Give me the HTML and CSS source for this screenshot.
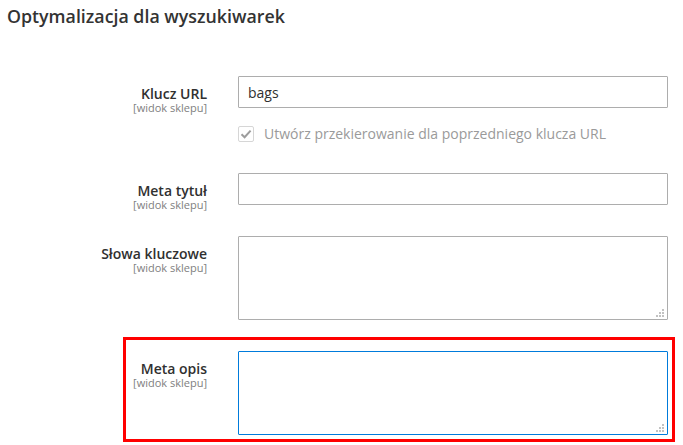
FILE: index.html
```html
<!DOCTYPE html>
<html lang="pl">
<head>
<meta charset="utf-8">
<title>Optymalizacja dla wyszukiwarek</title>
<link rel="stylesheet" href="styles.css">
</head>
<body>
<div class="page">
  <h2 class="section-title">Optymalizacja dla wyszukiwarek</h2>
  <div class="fields">
    <div class="field">
      <div class="label">
        <span class="label-text">Klucz URL</span>
        <span class="scope">[widok sklepu]</span>
      </div>
      <div class="control">
        <input class="input" type="text" value="bags">
        <label class="check-row">
          <span class="checkbox">
            <svg width="12" height="10" viewBox="0 0 12 10"><path d="M1.5 5.2 L4.6 8.2 L10.6 1.6" fill="none" stroke="#9d9d9d" stroke-width="2"/></svg>
          </span>
          <span class="check-text">Utwórz przekierowanie dla poprzedniego klucza URL</span>
        </label>
      </div>
    </div>
    <div class="field">
      <div class="label">
        <span class="label-text">Meta tytuł</span>
        <span class="scope">[widok sklepu]</span>
      </div>
      <div class="control">
        <input class="input" type="text" value="">
      </div>
    </div>
    <div class="field">
      <div class="label">
        <span class="label-text">Słowa kluczowe</span>
        <span class="scope">[widok sklepu]</span>
      </div>
      <div class="control textarea-wrap">
        <textarea class="textarea"></textarea>
        <svg class="grip" width="8" height="8" viewBox="0 0 8 8"><g fill="#c2c2c2"><rect x="6" y="0" width="2" height="2"/><rect x="3" y="3" width="2" height="2"/><rect x="6" y="3" width="2" height="2"/><rect x="0" y="6" width="2" height="2"/><rect x="3" y="6" width="2" height="2"/><rect x="6" y="6" width="2" height="2"/></g></svg>
      </div>
    </div>
    <div class="field highlighted">
      <div class="label">
        <span class="label-text">Meta opis</span>
        <span class="scope">[widok sklepu]</span>
      </div>
      <div class="control textarea-wrap">
        <textarea class="textarea focused"></textarea>
        <svg class="grip" width="8" height="8" viewBox="0 0 8 8"><g fill="#c2c2c2"><rect x="6" y="0" width="2" height="2"/><rect x="3" y="3" width="2" height="2"/><rect x="6" y="3" width="2" height="2"/><rect x="0" y="6" width="2" height="2"/><rect x="3" y="6" width="2" height="2"/><rect x="6" y="6" width="2" height="2"/></g></svg>
      </div>
    </div>
  </div>
</div>
</body>
</html>
```

FILE: styles.css
```css
* { box-sizing: border-box; }
html, body {
  margin: 0;
  padding: 0;
  background: #ffffff;
}
body {
  font-family: "Open Sans", "Liberation Sans", sans-serif;
  color: #303030;
  width: 683px;
  height: 445px;
  overflow: hidden;
}
.page {
  padding-top: 5px;
}
.section-title {
  margin: 0 0 48px 7px;
  font-size: 17.8px;
  line-height: 23px;
  font-weight: 600;
  color: #333333;
}
.fields {
  display: flex;
  flex-direction: column;
  gap: 31px;
}
.field {
  display: grid;
  grid-template-columns: 207px 430px;
  column-gap: 31px;
  align-items: start;
  position: relative;
}
.label {
  display: flex;
  flex-direction: column;
  align-items: flex-end;
  text-align: right;
  padding-top: 9.5px;
  margin-bottom: -10px;
}
.label-text {
  font-size: 14px;
  line-height: 16px;
  font-weight: 600;
  color: #303030;
}
.scope {
  font-size: 11px;
  line-height: 12px;
  color: #808080;
}
.control {
  display: flex;
  flex-direction: column;
}
.input {
  width: 430px;
  height: 32px;
  border: 1px solid #adadad;
  border-radius: 1px;
  padding: 0 9px;
  font-family: "Open Sans", "Liberation Sans", sans-serif;
  font-size: 14px;
  color: #303030;
  outline: none;
  background: #fff;
}
.check-row {
  display: flex;
  align-items: center;
  gap: 10px;
  margin-top: 18px;
  height: 16px;
}
.checkbox {
  width: 16px;
  height: 16px;
  border: 1px solid #d6d6d6;
  border-radius: 2px;
  display: flex;
  align-items: center;
  justify-content: center;
  background: #fff;
}
.check-text {
  font-size: 14px;
  line-height: 16px;
  color: #9a9a9a;
}
.textarea-wrap {
  position: relative;
}
.textarea {
  display: block;
  width: 430px;
  height: 84px;
  border: 1px solid #adadad;
  border-radius: 1px;
  resize: none;
  outline: none;
  font-family: "Open Sans", "Liberation Sans", sans-serif;
  font-size: 14px;
  background: #fff;
}
.textarea.focused {
  border-color: #007bdb;
}
.grip {
  position: absolute;
  right: 4px;
  bottom: 3px;
}
.highlighted::after {
  content: "";
  box-sizing: border-box;
  position: absolute;
  left: 123px;
  top: -14px;
  width: 552px;
  height: 105px;
  border: 3px solid #ff0000;
  pointer-events: none;
}
```
